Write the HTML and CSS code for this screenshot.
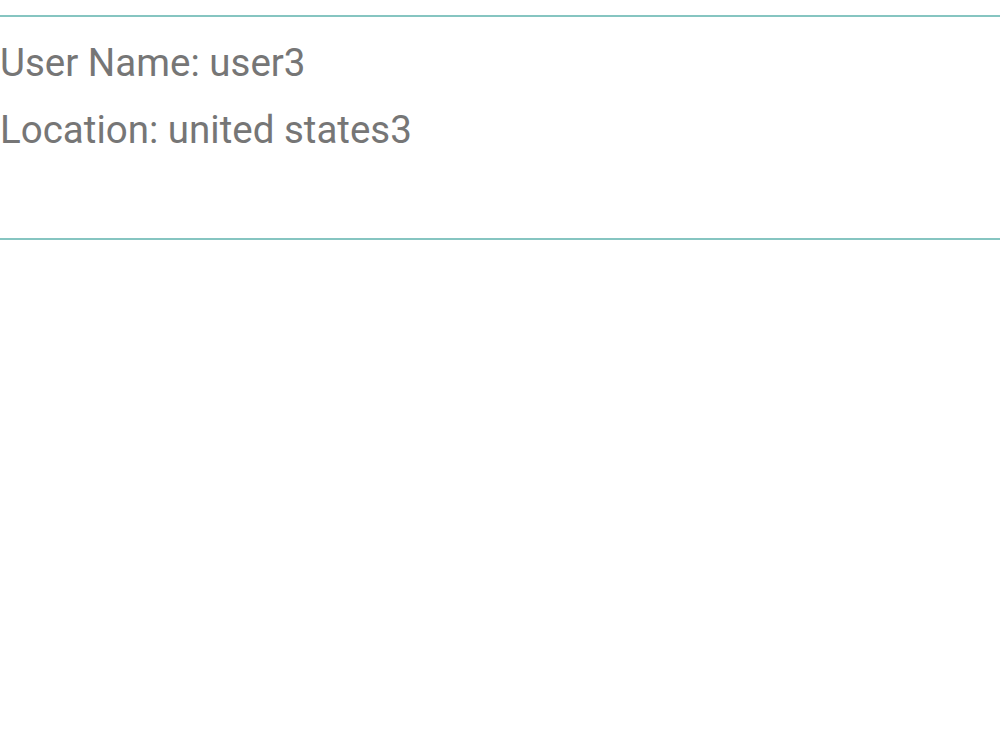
FILE: index.html
```html
<!DOCTYPE html>
<html>
<head>
<meta charset="utf-8">
<link rel="stylesheet" href="styles.css">
</head>
<body>
<div class="card">
  <p class="row">User Name: user3</p>
  <p class="row">Location: united states3</p>
</div>
</body>
</html>
```
FILE: styles.css
```css
html, body { margin: 0; padding: 0; background: #fff; }
.card {
  margin-top: 15px;
  border-top: 2px solid #86c5c1;
  border-bottom: 2px solid #86c5c1;
  height: 225px;
  box-sizing: border-box;
  padding-top: 12px;
  font-family: Roboto, "Noto Sans", sans-serif;
  color: #767676;
}
.row {
  margin: 0;
  font-size: 38.5px;
  line-height: 67px;
  height: 67px;
}
```
